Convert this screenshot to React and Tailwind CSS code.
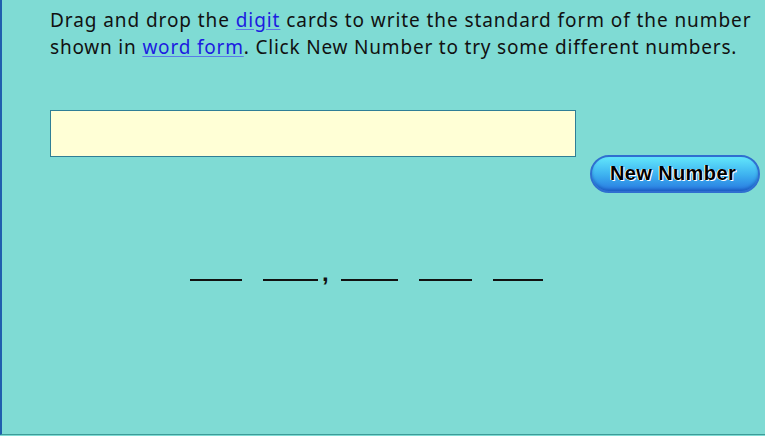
export default function App() {
  return (
    <div className="w-[765px] h-[436px] bg-[#7fdbd4] overflow-hidden">
      <div className="h-[435px] border-l-2 border-b border-l-[#1f5fae] border-b-[#3d9c98] flex flex-col">
        <div
          className="pl-[48px] pt-[7px] text-[19px] leading-[27px] text-[#111]"
          style={{ fontFamily: '"Noto Sans", "Liberation Sans", sans-serif' }}
        >
          <div className="whitespace-nowrap tracking-[0.92px]">
            Drag and drop the{" "}
            <span className="text-[#1c1ce0] underline decoration-[#5a7ae8] underline-offset-2">digit</span>{" "}
            cards to write the standard form of the number
          </div>
          <div className="whitespace-nowrap tracking-[0.8px]">
            shown in{" "}
            <span className="text-[#1c1ce0] underline decoration-[#5a7ae8] underline-offset-2">word form</span>. Click New Number to try some different numbers.
          </div>
        </div>

        <div className="flex items-start mt-[49px] ml-[48px]">
          <div className="w-[526px] h-[47px] bg-[#ffffd6] border border-[#2f7f96]" />
          <div className="mt-[45px] ml-[14px] w-[170px] h-[38px] rounded-full border-2 border-[#2f6fd0] bg-gradient-to-b from-[#62e6fb] via-[#3fb4f0] to-[#2a78e0] shadow-[inset_0_-2px_3px_rgba(0,40,140,0.35)] flex items-center justify-center pb-[3px] pr-[4px]">
            <span
              className="text-[20px] font-bold text-black tracking-[0.4px] [text-shadow:1px_1px_0_#fff,-1px_0_0_#fff]"
              style={{ fontFamily: '"Liberation Sans", Arial, sans-serif' }}
            >
              New Number
            </span>
          </div>
        </div>

        <div className="flex items-end mt-[76px] ml-[188px] h-[12px]">
          <div className="w-[52px] border-b-2 border-[#111]" />
          <div className="w-[55px] ml-[21px] border-b-2 border-[#111]" />
          <div className="relative w-[23px] h-full">
            <span
              className="absolute left-[4px] top-[-8px] text-[24px] font-bold leading-none text-[#111]"
              style={{ fontFamily: '"Liberation Sans", Arial, sans-serif' }}
            >
              ,
            </span>
          </div>
          <div className="w-[57px] border-b-2 border-[#111]" />
          <div className="w-[53px] ml-[21px] border-b-2 border-[#111]" />
          <div className="w-[50px] ml-[21px] border-b-2 border-[#111]" />
        </div>
      </div>
    </div>
  );
}
